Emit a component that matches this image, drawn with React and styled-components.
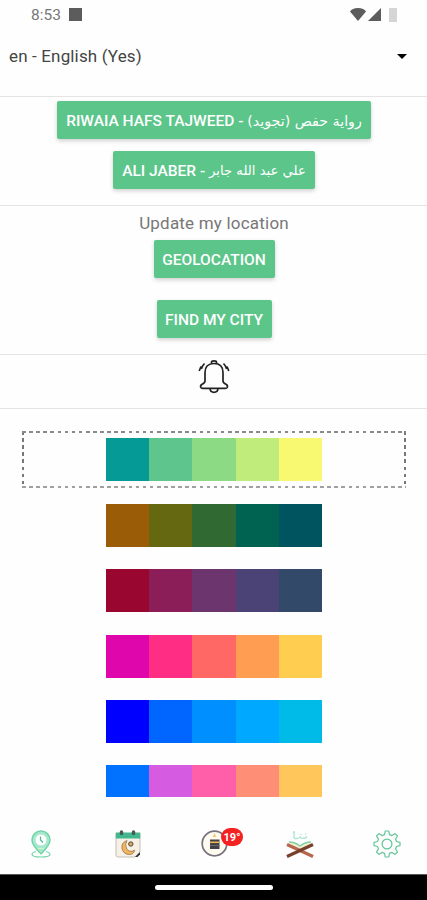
import React, { useState } from "react";
import styled, { createGlobalStyle, css } from "styled-components";

const GlobalStyle = createGlobalStyle`
  * {
    box-sizing: border-box;
  }

  body {
    margin: 0;
    background: #fff;
    font-family: Roboto, "DejaVu Sans", sans-serif;
  }
`;

const Screen = styled.div`
  display: flex;
  flex-direction: column;
  width: 427px;
  height: 900px;
  overflow: hidden;
  background: #fefefe;
`;

const StatusBar = styled.header`
  display: flex;
  align-items: center;
  justify-content: space-between;
  height: 29px;
  padding: 0 30px 0 31px;
  color: #777;
  font-size: 15.5px;
`;

const StatusGroup = styled.div`
  display: flex;
  align-items: center;
  gap: ${(props) => props.$gap};
`;

const Notification = styled.div`
  width: 13px;
  height: 13px;
  background: #5c5c5c;
`;

const Section = styled.section`
  display: flex;
  flex-direction: column;
  align-items: center;
  flex: none;
  height: ${(props) => props.$height};
  padding-top: ${(props) => props.$top || "0"};
  padding-left: 1px;
  border-bottom: 1px solid #e4e4e4;
`;

const LanguageSelect = styled.button`
  display: flex;
  align-items: center;
  justify-content: space-between;
  width: 100%;
  height: 54px;
  padding: 0 20px 0 8px;
  border: 0;
  background: none;
  color: #444;
  font: 17px Roboto, sans-serif;
  letter-spacing: 0.15px;
`;

const Caret = styled.span`
  border: 5px solid transparent;
  border-top-color: #000;
  border-bottom: 0;
`;

const Button = styled.button`
  display: flex;
  align-items: center;
  justify-content: center;
  flex: none;
  width: ${(props) => props.$width};
  height: 38px;
  margin-bottom: ${(props) => props.$after || "0"};
  padding: 2px 0 0;
  border: 0;
  border-radius: 2px;
  background: #5bc58a;
  box-shadow: 0 2px 4px rgba(0, 0, 0, 0.18);
  color: #fff;
  font: 500 15.5px Roboto, "DejaVu Sans", sans-serif;
  white-space: pre;
`;

const Arabic = styled.span`
  font-family: "DejaVu Sans", sans-serif;
  font-size: ${(props) => props.$size};
  font-weight: 400;
  line-height: 20px;
`;

const Label = styled.div`
  height: 20px;
  margin-bottom: 7px;
  color: #777;
  font-size: 17px;
  line-height: 20px;
  letter-spacing: 0.2px;
`;

const Themes = styled.main`
  display: flex;
  flex-direction: column;
  align-items: center;
  flex: none;
  height: 388px;
  padding-top: 22px;
  padding-left: 1px;
  overflow: hidden;
`;

const dashes = css`
  background-image: repeating-linear-gradient(90deg, #8a8a8a 0 3.6px, transparent 3.6px 7.1px),
    repeating-linear-gradient(90deg, #a0a0a0 0 3.6px, transparent 3.6px 7.1px),
    repeating-linear-gradient(180deg, #777 0 3.6px, transparent 3.6px 7.1px),
    repeating-linear-gradient(180deg, #777 0 3.6px, transparent 3.6px 7.1px);
  background-position: top, bottom, left, right;
  background-repeat: no-repeat;
  background-size: 100% 2px, 100% 2px, 2px 100%, 2px 100%;
`;

const Theme = styled.div`
  display: flex;
  justify-content: center;
  flex: none;
  width: 384px;
  height: 57px;
  margin-bottom: ${(props) => (props.$active ? "9px" : "8.3px")};
  padding-top: 7px;
  ${(props) => props.$active && dashes}
`;

const Swatch = styled.div`
  width: 43.4px;
  height: 43px;
  background: ${(props) => props.$color};
`;

const TabBar = styled.nav`
  display: flex;
  flex: none;
  height: 77px;
`;

const Tab = styled.div`
  position: relative;
  display: flex;
  align-items: center;
  justify-content: center;
  width: ${(props) => props.$width};
  padding-top: 16px;
`;

const Badge = styled.span`
  position: absolute;
  top: 31px;
  left: 47px;
  width: 22px;
  height: 18px;
  border-radius: 9px;
  background: #f32222;
  color: #fff;
  font-size: 11px;
  font-weight: 700;
  line-height: 19px;
  text-align: center;
`;

const GestureBar = styled.footer`
  display: flex;
  align-items: center;
  justify-content: center;
  flex: none;
  height: 26px;
  border-top: 1px solid #555;
  background: #000;
`;

const Pill = styled.div`
  width: 118px;
  height: 5px;
  border-radius: 3px;
  background: #fff;
`;

const themes = [
  ["#069a97", "#5ec68d", "#8cda83", "#bfec7b", "#f9f871"],
  ["#9b5c08", "#656810", "#306932", "#006251", "#00545f"],
  ["#990731", "#8b1e58", "#6d356d", "#4b4275", "#334969"],
  ["#df07ab", "#ff2e84", "#ff6864", "#ff9d52", "#ffce50"],
  ["#0000ff", "#0066ff", "#008fff", "#00a8ff", "#00bbe7"],
  ["#0072ff", "#d55be0", "#ff5fa9", "#ff8e76", "#ffc65b"],
];

const BellIcon = () => (
  <svg width="32" height="36" viewBox="0 0 32 36" fill="none" stroke="#222" strokeWidth="1.7">
    <path d="M13.5 5V3.2q0-1.4 2.5-1.4t2.5 1.4V5M7 22V13.5q0-9 9-9T25 13.5V22q0 2 3 3.3 2 1.2 1.3 3-.5 1-2 1H4.8q-1.7 0-2.1-1-.6-1.8 1.4-3Q7 24 7 22Z" />
    <path d="M12 29.500q.3 3.800 4 3.800t4-3.800M6.500 4.500Q4 7 3.300 10M3 7.500 1.200 12M25.500 4.500q2.500 2.500 3.200 5.500M29 7.500 30.800 12" />
  </svg>
);

const WifiIcon = () => (
  <svg width="16" height="13" viewBox="0 0 16 13">
    <path d="M0 3.5Q2 0 8 0t8 3.5L8 13Z" fill="#5c5c5c" />
  </svg>
);

const SignalIcon = () => (
  <svg width="13" height="13" viewBox="0 0 13 13">
    <path d="M13 0v13H0Z" fill="#5c5c5c" />
  </svg>
);

const BatteryIcon = () => (
  <svg width="8" height="14" viewBox="0 0 8 14">
    <path d="M0 0h8v14H0Z" fill="#d5d5d5" />
  </svg>
);

const PlaceIcon = () => (
  <svg width="20" height="28" viewBox="0 0 20 28" fill="none" stroke="#72d4ab">
    <path d="M5 21.5q-4 1-4 3Q1 27 10 27t9-2.5q0-2-4-3" strokeWidth="1.2" />
    <path
      d="M10 24Q1 15 1 10a9 9 0 0 1 18 0q0 5-9 14Z"
      fill="#a5e8cb"
      strokeWidth="1.5"
    />
    <circle cx="10" cy="10" r="5.8" fill="#fff" stroke="#b8ebd8" />
    <path d="M9.5 6.5V10l2.5 2.5" stroke="#4fbd92" strokeWidth="1.3" />
    <path d="M7 18.5h6M8 23l2 2 2-2" stroke="#d8f1c6" />
  </svg>
);

const CalendarIcon = () => (
  <svg width="26" height="28" viewBox="0 0 26 28">
    <path d="M1 3.5h24V22l-5 5H3q-2 0-2-2Z" fill="#f7f0e6" stroke="#c3beb7" />
    <path d="M.8 2.5h24.4v6H.8Z" fill="#42b68c" />
    <path d="M6.5 2v1.5M18.5 2v1.5" stroke="#465b57" strokeWidth="3.5" strokeLinecap="round" />
    <path
      d="M12 10.5q-6 2-5 8 1.5 6 7.5 6 4 0 5.2-4.2-5.2 2.5-7.9-1.3-2.5-4 .2-8.5Z"
      fill="#efb661"
      stroke="#866438"
      strokeWidth=".7"
    />
    <circle cx="15.8" cy="14" r="2.2" fill="#e1a75b" stroke="#4e4b43" />
    <path d="m20 27 5-5v2.5L22.5 27Z" fill="#343332" />
  </svg>
);

const KaabaIcon = () => (
  <svg width="27" height="27" viewBox="0 0 27 27">
    <circle cx="13.5" cy="13.5" r="12.3" fill="#fffaf0" stroke="#77717c" strokeWidth="1.7" />
    <path d="m13.5 3 2 4h-4Z" fill="#f3cd79" />
    <path d="M9 9.5h9.5V19H9Z" fill="#414047" />
    <path d="M9 12.3h9.5" stroke="#e8b858" strokeWidth="1.6" />
    <path d="M9 15.5h9.5" stroke="#777079" strokeWidth=".8" />
  </svg>
);

const QuranIcon = () => (
  <svg width="28" height="28" viewBox="0 0 28 28" fill="none">
    <path
      d="M8 1v6q0 2 3 1.5 2 0 3-1.5 1 2 3 1 2 1 4-1.5M7 3l2-1M15 4v1M19 4h1"
      stroke="#a9e3cd"
      strokeWidth="1.3"
    />
    <path d="M3 12q6 0 11 4 5-4 11-4l-2 5-9 4-9-4Z" fill="#f5efcc" />
    <path d="M3 12q6 0 11 4 5-4 11-4" stroke="#80cfab" strokeWidth="1.5" />
    <path d="m1 14.5 26 12" stroke="#b8654d" strokeWidth="3.2" />
    <path d="M1 26.5 27 14.5" stroke="#77402b" strokeWidth="3.2" />
  </svg>
);

const GearIcon = () => (
  <svg width="28" height="28" viewBox="0 0 28 28" fill="none" stroke="#64c699" strokeWidth="1.2">
    <path
      d="M11.5 4.6 12.3 1h3.4l.8 3.6 2.5 1 3.1-2 2.4 2.4-2 3.1 1 2.4 3.5.8v3.4l-3.5.8-1 2.4 2 3.1-2.4 2.4-3.1-2-2.5 1-.8 3.6h-3.4l-.8-3.6-2.5-1-3.1 2L3.5 22l2-3.1-1-2.4-3.5-.8v-3.4l3.5-.8 1-2.4-2-3.1 2.4-2.4 3.1 2Z"
      strokeLinejoin="round"
    />
    <circle cx="14" cy="14" r="4.9" />
  </svg>
);

export default function App() {
  const [active, setActive] = useState(0);

  return (
    <Screen>
      <GlobalStyle />
      <StatusBar>
        <StatusGroup $gap="8px">
          <span>8:53</span>
          <Notification />
        </StatusGroup>
        <StatusGroup $gap="8px">
          <StatusGroup $gap="2px">
            <WifiIcon />
            <SignalIcon />
          </StatusGroup>
          <BatteryIcon />
        </StatusGroup>
      </StatusBar>

      <Section $height="68px">
        <LanguageSelect>
          en - English (Yes)
          <Caret />
        </LanguageSelect>
      </Section>

      <Section $height="109px" $top="4px">
        <Button $width="314px" $after="11.5px">
          {"RIWAIA HAFS TAJWEED - "}
          <Arabic dir="rtl" $size="14.2px">
            رواية حفص (تجويد)
          </Arabic>
        </Button>
        <Button $width="202px">
          {"ALI JABER - "}
          <Arabic dir="rtl" $size="13.2px">
            علي عبد الله جابر
          </Arabic>
        </Button>
      </Section>

      <Section $height="149px" $top="7px">
        <Label>Update my location</Label>
        <Button $width="121px" $after="22px">
          GEOLOCATION
        </Button>
        <Button $width="115px">FIND MY CITY</Button>
      </Section>

      <Section $height="54px" $top="4px">
        <BellIcon />
      </Section>

      <Themes>
        {themes.map((colors, index) => (
          <Theme key={index} $active={index === active} onClick={() => setActive(index)}>
            {colors.map((color) => (
              <Swatch key={color} $color={color} />
            ))}
          </Theme>
        ))}
      </Themes>

      <TabBar>
        <Tab $width="81px">
          <PlaceIcon />
        </Tab>
        <Tab $width="93px">
          <CalendarIcon />
        </Tab>
        <Tab $width="80px">
          <KaabaIcon />
          <Badge>19°</Badge>
        </Tab>
        <Tab $width="92px">
          <QuranIcon />
        </Tab>
        <Tab $width="81px">
          <GearIcon />
        </Tab>
      </TabBar>

      <GestureBar>
        <Pill />
      </GestureBar>
    </Screen>
  );
}
